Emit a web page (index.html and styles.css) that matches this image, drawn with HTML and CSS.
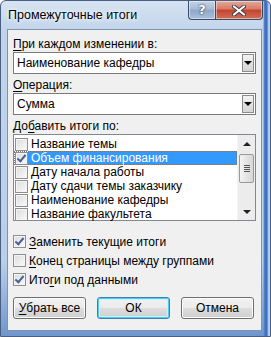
FILE: index.html
```html
<!DOCTYPE html>
<html><head><meta charset="utf-8"><title>Промежуточные итоги</title>
<link rel="stylesheet" href="styles.css">
</head><body>
<div class="window">
   <div class="titlebar">
      <span class="title">Промежуточные итоги</span>
      <div class="caption">
         <span class="cap help">?</span>
         <span class="cap close">
            <svg width="14" height="11" viewBox="0 0 14 11"><path d="M2 1.5 L12 9.5 M12 1.5 L2 9.5" stroke="#3a3f4a" stroke-width="4" stroke-linecap="round"/><path d="M2 1.5 L12 9.5 M12 1.5 L2 9.5" stroke="#fff" stroke-width="2.2" stroke-linecap="round"/></svg>
         </span>
      </div>
   </div>
   <div class="client">
      <div class="label"><u>П</u>ри каждом изменении в:</div>
      <div class="combo">
         <span class="value">Наименование кафедры</span>
         <span class="drop"><i class="tri"></i></span>
      </div>
      <div class="label gap"><u>О</u>перация:</div>
      <div class="combo">
         <span class="value">Сумма</span>
         <span class="drop"><i class="tri"></i></span>
      </div>
      <div class="label gap">До<u>б</u>авить итоги по:</div>
      <div class="list">
         <div class="rows">
            <div class="row"><i class="box"></i><span class="txt">Название темы</span></div>
            <div class="row sel"><i class="box on"></i><span class="txt">Объем финансирования</span></div>
            <div class="row"><i class="box"></i><span class="txt">Дату начала работы</span></div>
            <div class="row"><i class="box"></i><span class="txt">Дату сдачи темы заказчику</span></div>
            <div class="row"><i class="box"></i><span class="txt">Наименование кафедры</span></div>
            <div class="row"><i class="box"></i><span class="txt">Название факультета</span></div>
         </div>
         <div class="scroll">
            <span class="arrow"><i class="up"></i></span>
            <span class="thumb"><i></i><i></i><i></i><i></i></span>
            <span class="track"></span>
            <span class="arrow"><i class="down"></i></span>
         </div>
      </div>
      <div class="checks">
         <div class="check"><i class="box on"></i><span><u>З</u>аменить текущие итоги</span></div>
         <div class="check"><i class="box"></i><span><u>К</u>онец страницы между группами</span></div>
         <div class="check"><i class="box on"></i><span>Ито<u>г</u>и под данными</span></div>
      </div>
      <div class="buttons">
         <btn><u>У</u>брать все</btn>
         <btn class="default">ОК</btn>
         <btn>Отмена</btn>
      </div>
   </div>
</div>
</body></html>
```
FILE: styles.css
```css
body
{
	margin      : 0;
	font-family : "Liberation Sans", Arial, sans-serif;
	font-size   : 12px;
	line-height : 14px;
	color       : #000;
}
u { text-decoration-thickness : 1px; text-underline-offset : 2px; }
.window
{
	box-sizing     : border-box;
	width          : 271px;
	height         : 337px;
	display        : flex;
	flex-direction : column;
	border         : 1px solid #4a5f80;
	border-radius  : 6px 6px 0 0;
	background     :
		linear-gradient(to right, transparent 262px, #6b92c9 263px, #3d70c0 264px, #3d70c0 266px, #9fbde4 267px, #c4d7ef 269px),
		linear-gradient(to bottom, #d6e3f2 0, #c1d4eb 30px, #b9cfea 260px, #6d95cc 337px);
}
.titlebar { height : 28px; display : flex; align-items : flex-start; }
.title
{
	flex        : 1;
	padding     : 7px 0 0 7px;
	font-size   : 12.5px;
	color       : #000;
	text-shadow : 0 0 6px #fff, 0 0 3px #fff;
}
.caption { display : flex; margin-right : 7px; }
.cap
{
	height          : 18px;
	display         : flex;
	align-items     : center;
	justify-content : center;
	border          : 1px solid #3c4b66;
	border-top      : none;
	box-shadow      : inset 0 0 0 1px rgba(255,255,255,.45);
}
.help
{
	width         : 26px;
	border-right  : none;
	border-radius : 0 0 0 4px;
	background    : linear-gradient(#c3d2e5, #a8bcd6 45%, #8fa8c8 50%, #a9c0dc);
	color         : #fff;
	font-weight   : bold;
	font-size     : 13px;
	font-family   : "DejaVu Sans", sans-serif;
	text-shadow   : 0 0 2px #2c3a52, 0 0 1px #2c3a52;
}
.close
{
	width         : 46px;
	border-radius : 0 0 4px 0;
	background    : linear-gradient(#e5a898, #d77a67 45%, #c2432c 50%, #d0705a);
}
.client
{
	flex       : 1;
	margin     : 0 8px 5px 6px;
	padding    : 7px 5px 0 5px;
	background : #f0f0f0;
	border     : 1px solid #7f93b0;
}
.label { height : 15px; line-height : 15px; }
.label.gap { margin-top : 4px; }
.combo
{
	box-sizing  : border-box;
	height      : 22px;
	margin-top  : 0;
	display     : flex;
	align-items : center;
	border      : 1px solid #7a7a7a;
	background  : #fff;
	padding     : 0 1px 0 3px;
}
.combo .value { flex : 1; }
.drop
{
	box-sizing      : border-box;
	width           : 12px;
	height          : 18px;
	display         : flex;
	align-items     : center;
	justify-content : center;
	border          : 1px solid #8c8c8c;
	background      : linear-gradient(#f4f4f4, #e2e2e2 50%, #d4d4d4);
}
.tri
{
	width        : 0;
	height       : 0;
	border-left  : 4px solid transparent;
	border-right : 4px solid transparent;
	border-top   : 4px solid #000;
}
.list
{
	box-sizing : border-box;
	height     : 87px;
	display    : flex;
	border     : 1px solid #828790;
	background : #fff;
}
.rows { flex : 1; padding-top : 2px; }
.row { height : 14px; display : flex; align-items : center; padding-left : 1px; }
.row .txt { height : 14px; line-height : 14px; padding : 0 1px 0 3px; flex : 1; }
.row.sel { outline : 1px dotted #777; outline-offset : -1px; }
.row.sel .txt { background : #3399ff; color : #fff; }
.box
{
	box-sizing : border-box;
	width      : 13px;
	height     : 13px;
	display    : inline-block;
	border     : 1px solid #8f8f8f;
	background : linear-gradient(135deg, #dcdcdc, #fafafa);
	box-shadow : inset 0 0 0 1px #f4f4f4;
	position   : relative;
}
.box.on::after
{
	content      : "";
	position     : absolute;
	left         : 3px;
	top          : 0;
	width        : 3px;
	height       : 7px;
	border       : solid #4a5f97;
	border-width : 0 2px 2px 0;
	transform    : rotate(40deg);
}
.scroll
{
	width          : 17px;
	display        : flex;
	flex-direction : column;
	background     : #ececec;
	border-left    : 1px solid #f4f4f4;
}
.arrow { height : 17px; display : flex; align-items : center; justify-content : center; }
.up, .down
{
	width        : 0;
	height       : 0;
	border-left  : 4px solid transparent;
	border-right : 4px solid transparent;
}
.up   { border-bottom : 4px solid #222; }
.down { border-top : 4px solid #222; }
.thumb
{
	box-sizing      : border-box;
	height          : 29px;
	margin          : 2px 1px 0;
	border          : 1px solid #9a9a9a;
	border-radius   : 2px;
	background      : linear-gradient(to right, #f4f4f4, #e4e4e4 50%, #d6d6d6);
	display         : flex;
	flex-direction  : column;
	justify-content : center;
	align-items     : center;
	gap             : 1px;
}
.thumb i { width : 6px; height : 1px; background : #555; }
.track { flex : 1; }
.checks { margin-top : 11px; }
.check { height : 19px; display : flex; align-items : center; gap : 3px; }
.buttons { display : flex; gap : 11px; margin-top : 8px; }
btn
{
	box-sizing      : border-box;
	width           : 73px;
	height          : 22px;
	display         : flex;
	align-items     : center;
	justify-content : center;
	border          : 1px solid #707070;
	border-radius   : 3px;
	background      : linear-gradient(#f2f2f2, #ebebeb 50%, #dddddd 51%, #cfcfcf);
	box-shadow      : inset 0 0 0 1px #fcfcfc;
}
btn.default
{
	border     : 1px solid #3c7fb1;
	box-shadow : inset 0 0 0 1px #48d0f4, inset 0 0 0 2px #cdeefb;
}
```
